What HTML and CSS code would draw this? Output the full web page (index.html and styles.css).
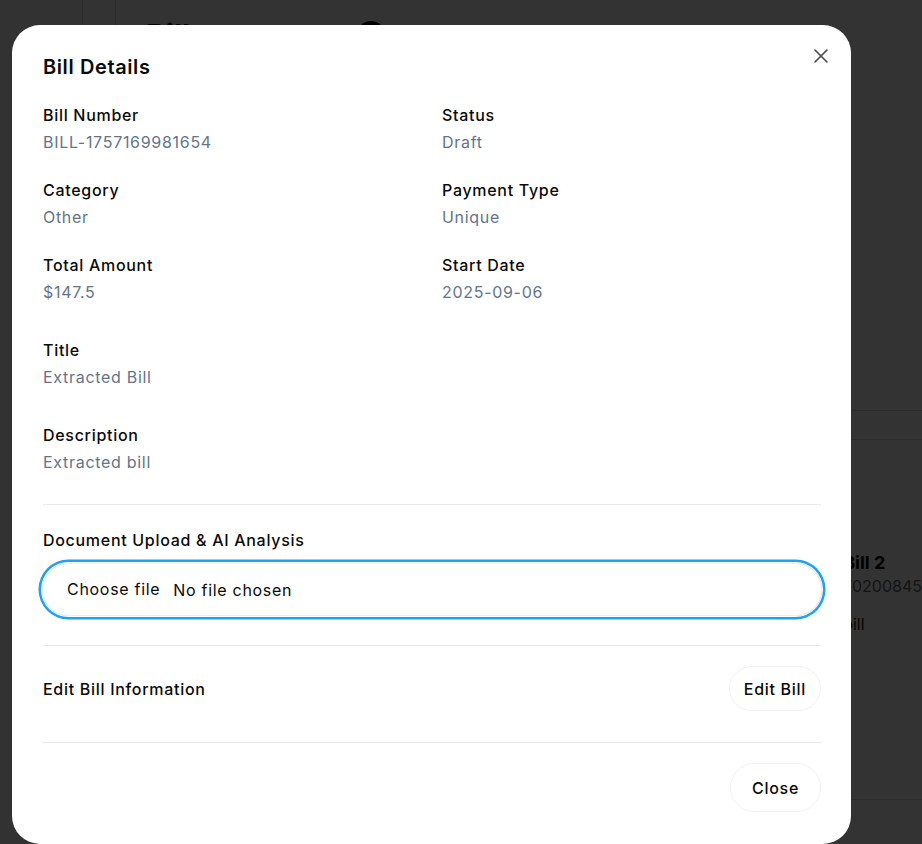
FILE: index.html
```html
<!DOCTYPE html>
<html lang="en">
<head>
<meta charset="utf-8">
<title>Bill Details</title>
<link rel="stylesheet" href="styles.css">
</head>
<body>
<div class="page">
  <aside class="sidebar"></aside>
  <main class="main">
    <header class="topbar">
      <h1 class="page-title">Bills</h1>
      <span class="avatar"></span>
    </header>
    <section class="bills">
      <div class="bill-card"></div>
      <div class="bill-card">
        <div class="bc-head"></div>
        <div class="bc-body">
          <div class="bc-title">Bill 2</div>
          <div class="bc-num">70200845</div>
          <div class="bc-desc">bill</div>
        </div>
      </div>
    </section>
  </main>
</div>

<div class="overlay"></div>

<div class="modal" role="dialog" aria-labelledby="dlg-title">
  <button class="close-x" aria-label="Close">
    <svg width="24" height="24" viewBox="0 0 24 24" fill="none" stroke="currentColor" stroke-width="1.6" stroke-linecap="round"><path d="M18 6 6 18"/><path d="m6 6 12 12"/></svg>
  </button>
  <h2 class="modal-title" id="dlg-title">Bill Details</h2>

  <div class="grid">
    <div class="field"><div class="label">Bill Number</div><div class="value">BILL-1757169981654</div></div>
    <div class="field"><div class="label">Status</div><div class="value">Draft</div></div>
    <div class="field"><div class="label">Category</div><div class="value">Other</div></div>
    <div class="field"><div class="label">Payment Type</div><div class="value">Unique</div></div>
    <div class="field"><div class="label">Total Amount</div><div class="value">$147.5</div></div>
    <div class="field"><div class="label">Start Date</div><div class="value">2025-09-06</div></div>
  </div>

  <div class="field wide"><div class="label">Title</div><div class="value">Extracted Bill</div></div>
  <div class="field wide"><div class="label">Description</div><div class="value">Extracted bill</div></div>

  <hr class="divider first">

  <div class="label upload-label">Document Upload &amp; AI Analysis</div>
  <div class="file-input">
    <span class="file-btn">Choose file</span>
    <span class="file-name">No file chosen</span>
  </div>

  <hr class="divider">

  <div class="edit-row">
    <span class="label">Edit Bill Information</span>
    <button class="btn btn-edit">Edit Bill</button>
  </div>

  <hr class="divider">

  <div class="footer">
    <button class="btn btn-close">Close</button>
  </div>
</div>
</body>
</html>
```

FILE: styles.css
```css
* { box-sizing: border-box; }

html, body {
  margin: 0;
  padding: 0;
  height: 100%;
  overflow: hidden;
}

body {
  font-family: Inter, "Noto Sans", "Liberation Sans", sans-serif;
  color: #0a0a0a;
  background: #ffffff;
}

/* underlying page */
.page {
  display: grid;
  grid-template-columns: 83px 1fr;
  height: 100%;
}

.sidebar {
  border-right: 1px solid #d8d8d8;
  background: #f7f7f7;
}

.main {
  padding: 0 0 0 32px;
}

.topbar {
  display: flex;
  align-items: center;
  gap: 150px;
  height: 70px;
  padding-left: 30px;
  border-left: 1px solid #dcdcdc;
}

.page-title {
  margin: 0;
  font-size: 30px;
  font-weight: 700;
}

.avatar {
  width: 28px;
  height: 28px;
  border-radius: 50%;
  background: #000;
}

.bills {
  display: grid;
  grid-template-columns: 1fr 1fr;
  gap: 24px;
  margin-top: 340px;
}

.bill-card {
  border-top: 1px solid #e2e2e2;
  border-bottom: 1px solid #e2e2e2;
  height: 390px;
}

.bc-head {
  height: 29px;
  border-bottom: 1px solid #e2e2e2;
}

.bc-body {
  padding: 111px 0 0 319px;
}

.bc-title {
  font-size: 18px;
  font-weight: 700;
  color: #000;
  line-height: 24px;
}

.bc-num {
  font-size: 16px;
  color: #666;
  line-height: 22px;
}

.bc-desc {
  margin-top: 16px;
  font-size: 16px;
  color: #222;
  line-height: 22px;
}

/* overlay and dialog */
.overlay {
  position: fixed;
  inset: 0;
  background: rgba(0, 0, 0, 0.8);
}

.modal {
  position: fixed;
  left: 12px;
  top: 25px;
  width: 839px;
  background: #ffffff;
  border-radius: 28px;
  padding: 32px 30px 32px 31px;
  letter-spacing: 0.7px;
}

.close-x {
  position: absolute;
  top: 19px;
  right: 18px;
  width: 24px;
  height: 24px;
  padding: 0;
  border: 0;
  background: transparent;
  color: #4a4a4a;
  display: flex;
}

.modal-title {
  margin: 0;
  font-size: 20px;
  line-height: 20px;
  font-weight: 600;
  letter-spacing: 0.6px;
}

.grid {
  display: grid;
  grid-template-columns: 1fr 1fr;
  column-gap: 20px;
  row-gap: 24px;
  margin-top: 26px;
}

.label {
  font-size: 16px;
  line-height: 24px;
  font-weight: 500;
  color: #0a0a0a;
}

.value {
  margin-top: 3px;
  font-size: 16px;
  line-height: 24px;
  color: #64748b;
}

.field.wide {
  margin-top: 34px;
}

.divider {
  border: 0;
  border-top: 1px solid #e6eaef;
  margin: 0;
}

.divider.first {
  margin-top: 30px;
}

.upload-label {
  margin-top: 23px;
}

.file-input {
  margin: 11px -1px 0 -1px;
  height: 53px;
  border: 1px solid #eceef1;
  border-radius: 999px;
  box-shadow: 0 0 0 1px #ffffff, 0 0 0 3.5px #1da1f2;
  display: flex;
  align-items: center;
  padding-left: 24px;
  font-size: 16px;
}

.file-btn {
  font-weight: 400;
  color: #0a0a0a;
  margin-right: 13px;
  position: relative;
  top: -1px;
}

.file-name {
  color: #0a0a0a;
}

.file-input + .divider {
  margin-top: 29px;
}

.edit-row {
  display: flex;
  align-items: center;
  justify-content: space-between;
  margin: 20px 0 31px;
}

.btn {
  font-family: inherit;
  font-size: 16px;
  font-weight: 500;
  letter-spacing: 0.7px;
  color: #0a0a0a;
  background: #ffffff;
  border: 1px solid #f1f2f4;
  border-radius: 999px;
  cursor: pointer;
}

.btn-edit {
  height: 45px;
  padding: 0 14px;
}

.footer {
  display: flex;
  justify-content: flex-end;
  margin-top: 20px;
}

.btn-close {
  height: 49px;
  padding: 0 21px;
}
```
